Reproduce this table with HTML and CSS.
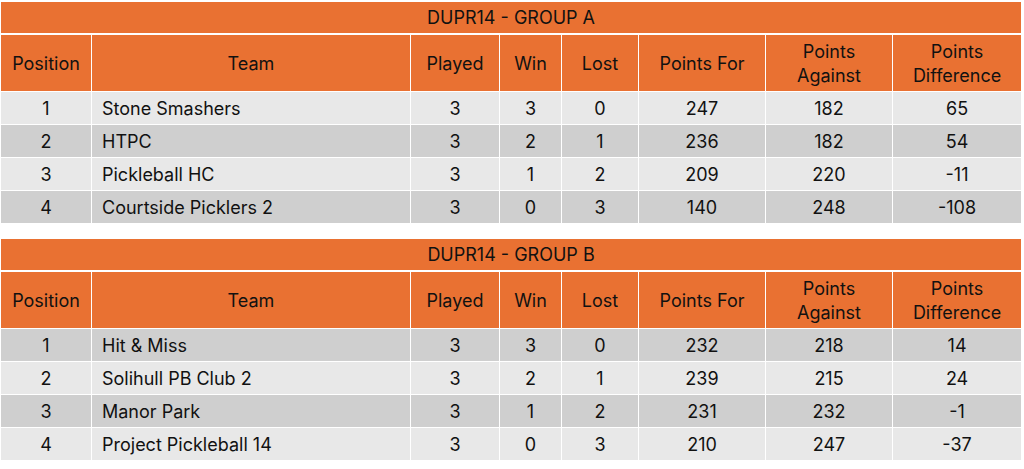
FILE: index.html
```html
<!DOCTYPE html>
<html lang="en">
<head>
<meta charset="utf-8">
<title>DUPR14 Groups</title>
<link rel="stylesheet" href="styles.css">
</head>
<body>
<div class="page">
  <table class="standings">
    <colgroup>
      <col class="c-pos"><col class="c-team"><col class="c-played"><col class="c-win"><col class="c-lost"><col class="c-for"><col class="c-against"><col class="c-diff">
    </colgroup>
    <thead>
      <tr><th class="title" colspan="8">DUPR14 - GROUP A</th></tr>
      <tr class="head">
        <th>Position</th><th>Team</th><th>Played</th><th>Win</th><th>Lost</th><th>Points For</th><th>Points<br>Against</th><th>Points<br>Difference</th>
      </tr>
    </thead>
    <tbody>
      <tr class="light"><td>1</td><td class="team">Stone Smashers</td><td>3</td><td>3</td><td>0</td><td>247</td><td>182</td><td>65</td></tr>
      <tr class="dark"><td>2</td><td class="team">HTPC</td><td>3</td><td>2</td><td>1</td><td>236</td><td>182</td><td>54</td></tr>
      <tr class="light"><td>3</td><td class="team">Pickleball HC</td><td>3</td><td>1</td><td>2</td><td>209</td><td>220</td><td>-11</td></tr>
      <tr class="dark"><td>4</td><td class="team">Courtside Picklers 2</td><td>3</td><td>0</td><td>3</td><td>140</td><td>248</td><td>-108</td></tr>
    </tbody>
  </table>

  <table class="standings">
    <colgroup>
      <col class="c-pos"><col class="c-team"><col class="c-played"><col class="c-win"><col class="c-lost"><col class="c-for"><col class="c-against"><col class="c-diff">
    </colgroup>
    <thead>
      <tr><th class="title" colspan="8">DUPR14 - GROUP B</th></tr>
      <tr class="head">
        <th>Position</th><th>Team</th><th>Played</th><th>Win</th><th>Lost</th><th>Points For</th><th>Points<br>Against</th><th>Points<br>Difference</th>
      </tr>
    </thead>
    <tbody>
      <tr class="dark"><td>1</td><td class="team">Hit &amp; Miss</td><td>3</td><td>3</td><td>0</td><td>232</td><td>218</td><td>14</td></tr>
      <tr class="light"><td>2</td><td class="team">Solihull PB Club 2</td><td>3</td><td>2</td><td>1</td><td>239</td><td>215</td><td>24</td></tr>
      <tr class="dark"><td>3</td><td class="team">Manor Park</td><td>3</td><td>1</td><td>2</td><td>231</td><td>232</td><td>-1</td></tr>
      <tr class="light"><td>4</td><td class="team">Project Pickleball 14</td><td>3</td><td>0</td><td>3</td><td>210</td><td>247</td><td>-37</td></tr>
    </tbody>
  </table>
</div>
</body>
</html>
```

FILE: styles.css
```css
html, body {
  margin: 0;
  padding: 0;
  background: #ffffff;
}

.page {
  display: flex;
  flex-direction: column;
  gap: 15px;
  padding: 2px 0 0 1px;
  font-family: Inter, "Open Sans", "Liberation Sans", sans-serif;
  font-size: 18px;
  color: #111111;
}

.standings {
  width: 1020px;
  table-layout: fixed;
  border-collapse: separate;
  border-spacing: 0;
}

.c-pos { width: 91px; }
.c-team { width: 319px; }
.c-played { width: 89px; }
.c-win { width: 62px; }
.c-lost { width: 77px; }
.c-for { width: 127px; }
.c-against { width: 127px; }
.c-diff { width: 128px; }

.standings th,
.standings td {
  padding: 1px 0 0;
  text-align: center;
  vertical-align: middle;
  font-weight: 400;
  box-sizing: border-box;
}

.standings th.title {
  height: 33px;
  background: #e97132;
  border-bottom: 2px solid #ffffff;
  line-height: 24px;
}

.standings .head th {
  height: 57px;
  background: #e97132;
  border-right: 1px solid #ffffff;
  border-bottom: 1px solid #ffffff;
  line-height: 24px;
}

.standings .head th:last-child,
.standings td:last-child {
  border-right: none;
}

.standings td {
  height: 33px;
  border-right: 1px solid #ffffff;
  border-bottom: 1px solid #ffffff;
  line-height: 20px;
}

.standings td.team {
  text-align: left;
  padding-left: 10px;
}

.light td { background: #e8e8e8; }
.dark td { background: #cfcfcf; }
```
